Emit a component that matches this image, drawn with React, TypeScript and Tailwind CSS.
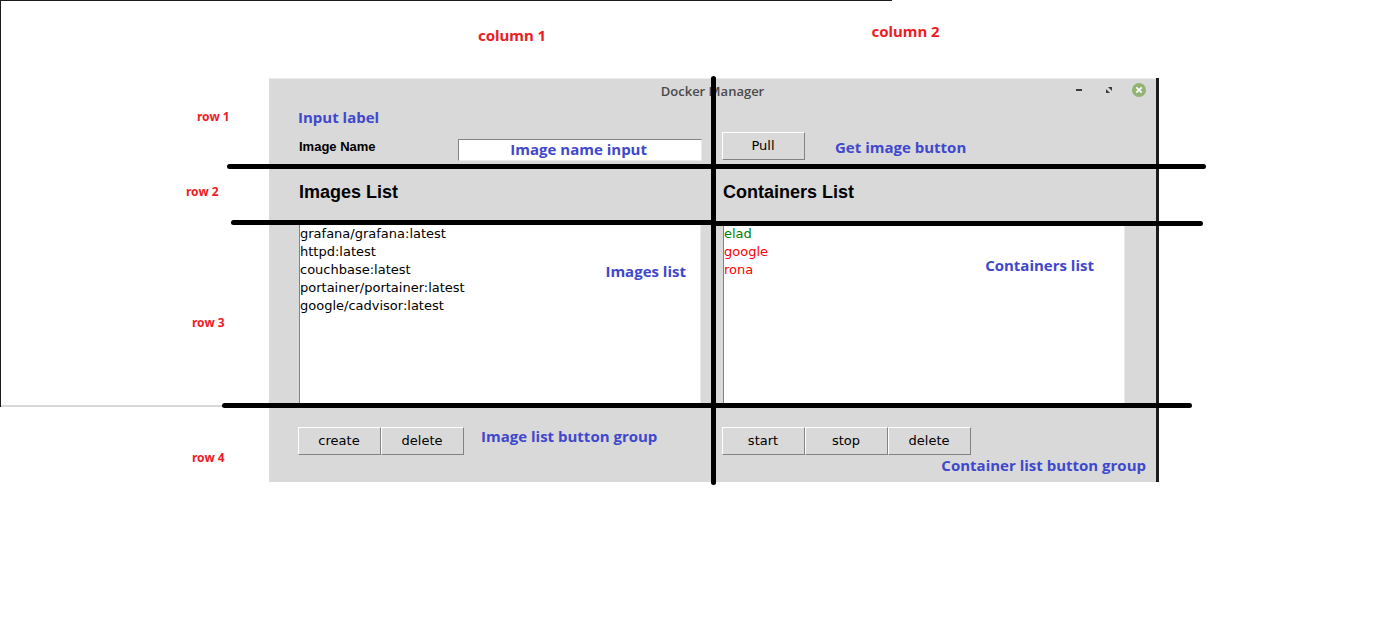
import type { ReactNode } from "react";

const images = [
  "grafana/grafana:latest",
  "httpd:latest",
  "couchbase:latest",
  "portainer/portainer:latest",
  "google/cadvisor:latest",
];

const containers = [
  { name: "elad", running: true },
  { name: "google", running: false },
  { name: "rona", running: false },
];

function Note({ place, children }: { place: string; children: ReactNode }) {
  return (
    <span
      className={`pointer-events-none absolute z-20 whitespace-nowrap font-['Open_Sans','Noto_Sans',sans-serif] text-[15px] leading-5 font-bold text-[#3f48cc] ${place}`}
    >
      {children}
    </span>
  );
}

function RowLabel({ place, children }: { place: string; children: ReactNode }) {
  return (
    <span
      className={`absolute whitespace-nowrap font-['Noto_Sans',sans-serif] text-[12px] leading-4 font-bold text-[#ed1c24] ${place}`}
    >
      {children}
    </span>
  );
}

function Divider({ place }: { place: string }) {
  return <div className={`pointer-events-none absolute z-10 h-[5px] rounded-full bg-black ${place}`} />;
}

function PushButton({ children }: { children: ReactNode }) {
  return (
    <button
      type="button"
      className="h-7 w-[83px] border border-t-white border-r-[#828282] border-b-[#828282] border-l-white bg-[#d9d9d9] pr-px font-['DejaVu_Sans',sans-serif] text-[13px] leading-[18px] text-black"
    >
      {children}
    </button>
  );
}

const rowGrid = "relative grid grid-cols-[444fr_443fr]";
const leftCell = "relative pl-[29px] pr-[11px]";
const rightCell = "relative pl-[9px] pr-[31px]";
const listBox =
  "ml-px h-full border border-t-[#828282] border-r-[#ebebeb] border-b-[#ebebeb] border-l-[#828282] bg-white pt-0.5 font-['DejaVu_Sans',sans-serif] text-[13px] leading-[18px]";
const heading = "ml-px font-['Liberation_Sans',Arial,sans-serif] text-[18px] leading-6 font-bold text-black";
const columnLabel =
  "font-['Noto_Sans',sans-serif] text-[15px] leading-5 font-bold text-[#ed1c24]";

export default function App() {
  return (
    <div className="relative min-h-screen bg-white">
      <div className="pointer-events-none absolute top-0 left-0 h-[407px] w-[892px] border-t border-l border-[#1c1c1c]" />
      <div className="pointer-events-none absolute top-[405px] left-px h-0.5 w-[224px] bg-[#d9d9d9]" />

      <div className="pr-60 pl-[269px]">
        <div className="grid h-[78px] grid-cols-[444fr_443fr] items-start">
          <span className={`pt-[25px] pl-[209px] ${columnLabel}`}>column 1</span>
          <span className={`pt-[21px] pl-[157px] ${columnLabel}`}>column 2</span>
        </div>

        <main className="relative border-r-[3px] border-[#1c1c1c] bg-[#d9d9d9]">
          <header className="relative flex h-[26px] items-start justify-center border-t border-[#ebebeb] pt-px">
            <h1 className="font-['Open_Sans','Noto_Sans',sans-serif] text-[13px] leading-[22px] font-semibold text-[#4a4a4a]">
              Docker Manager
            </h1>
            <div className="absolute top-0 right-2.5 flex h-[22px] items-center gap-4">
              <button type="button" aria-label="Minimize" className="size-3.5">
                <svg viewBox="0 0 14 14" className="size-3.5">
                  <rect x="4" y="6" width="6" height="2" fill="#3c3c3c" />
                </svg>
              </button>
              <button type="button" aria-label="Maximize" className="size-3.5">
                <svg viewBox="0 0 14 14" className="size-3.5" fill="#3c3c3c">
                  <path d="M6 4h4v4L8.8 6.8 8 6 7.2 5.2zM4 6l1.2 1.2L6.8 8.8 8 10H4z" />
                </svg>
              </button>
              <button type="button" aria-label="Close" className="size-3.5">
                <svg viewBox="0 0 14 14" className="size-3.5">
                  <circle cx="7" cy="7" r="7" fill="#92b372" />
                  <path d="M4.3 4.3l5.4 5.4M9.7 4.3l-5.4 5.4" stroke="#fff" strokeWidth="1.8" />
                </svg>
              </button>
            </div>
          </header>

          <section className={`${rowGrid} h-[62px]`}>
            <RowLabel place="top-[5px] -left-[72px]">row 1</RowLabel>
            <div className={`${leftCell} flex items-start justify-between pt-[35px]`}>
              <Note place="top-[3px] left-[29px]">Input label</Note>
              <label
                htmlFor="image-name"
                className="ml-px font-['Liberation_Sans',Arial,sans-serif] text-[13px] leading-[15px] font-bold text-black"
              >
                Image Name
              </label>
              <input
                id="image-name"
                type="text"
                className="h-[22px] w-[244px] border border-t-[#828282] border-r-[#ebebeb] border-b-[#ebebeb] border-l-[#828282] bg-white px-1 text-sm outline-none"
              />
              <Note place="top-[35px] right-[66px]">Image name input</Note>
            </div>
            <div className={`${rightCell} flex items-start pt-7`}>
              <PushButton>Pull</PushButton>
              <Note place="top-[33px] left-[122px]">Get image button</Note>
            </div>
            <Divider place="-bottom-[3px] -left-[42px] -right-[50px]" />
          </section>

          <section className={`${rowGrid} h-14 items-center pb-1`}>
            <RowLabel place="top-[18px] -left-[83px]">row 2</RowLabel>
            <div className={leftCell}>
              <h2 className={heading}>Images List</h2>
            </div>
            <div className={rightCell}>
              <h2 className={heading}>Containers List</h2>
            </div>
            <Divider place="-bottom-[3px] -left-[38px] right-1/2" />
            <Divider place="-bottom-1 left-1/2 -right-[47px]" />
          </section>

          <section className={`${rowGrid} h-[183px]`}>
            <RowLabel place="top-[93px] -left-[77px]">row 3</RowLabel>
            <div className="relative pr-3 pl-[29px]">
              <ul className={`${listBox} text-black`}>
                {images.map((image) => (
                  <li key={image}>{image}</li>
                ))}
              </ul>
              <Note place="top-[39px] right-[27px]">Images list</Note>
            </div>
            <div className={rightCell}>
              <ul className={listBox}>
                {containers.map(({ name, running }) => (
                  <li key={name} className={running ? "text-[#008000]" : "text-[#ff0000]"}>
                    {name}
                  </li>
                ))}
              </ul>
              <Note place="top-[33px] right-[62px]">Containers list</Note>
            </div>
            <Divider place="-bottom-[3px] -left-[47px] -right-[36px]" />
          </section>

          <section className={`${rowGrid} h-[77px]`}>
            <RowLabel place="top-[45px] -left-[77px]">row 4</RowLabel>
            <div className={`${leftCell} flex items-start pt-[22px]`}>
              <PushButton>create</PushButton>
              <PushButton>delete</PushButton>
              <Note place="top-[21px] left-[212px]">Image list button group</Note>
            </div>
            <div className={`${rightCell} flex items-start pt-[22px]`}>
              <PushButton>start</PushButton>
              <PushButton>stop</PushButton>
              <PushButton>delete</PushButton>
              <Note place="top-[50px] right-[10px]">Container list button group</Note>
            </div>
          </section>

          <div className="pointer-events-none absolute -top-0.5 -bottom-[3px] left-1/2 z-10 -ml-0.5 w-[5px] rounded-full bg-black" />
        </main>
      </div>
    </div>
  );
}
